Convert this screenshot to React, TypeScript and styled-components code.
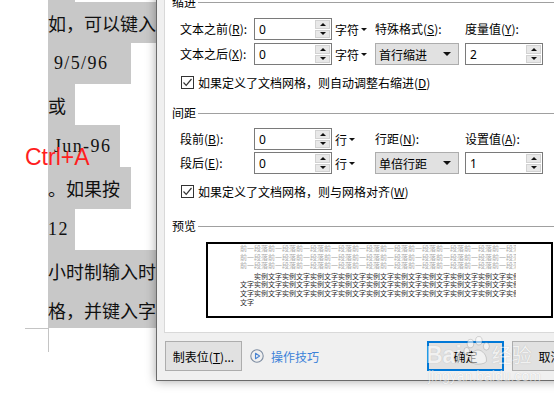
import React from 'react';
import styled, { createGlobalStyle } from 'styled-components';

const Global = createGlobalStyle`
  *, *::before, *::after { box-sizing: border-box; }
  html, body { margin: 0; padding: 0; background: #fff; }
  body {
    width: 554px; height: 396px; overflow: hidden;
    font-family: "Noto Sans CJK SC", "Noto Sans", sans-serif;
  }
`;

const Screen = styled.div`
  position: relative;
  display: flex;
  align-items: flex-start;
  width: 554px;
  height: 396px;
  overflow: hidden;
  background: #fff;
`;

/* ---------- document ---------- */
const DocPane = styled.div`
  flex: none;
  width: 156px;
  height: 396px;
  overflow: hidden;
  display: flex;
  flex-direction: column;
  align-items: flex-start;
  padding-left: 48px;
`;

const DocLine = styled.div<{ $h: number; $w: number; $latin?: boolean }>`
  flex: none;
  height: ${p => p.$h}px;
  width: ${p => p.$w}px;
  display: flex;
  align-items: center;
  background: #c8c8c8;
  white-space: pre;
  color: #111;
  font-family: ${p => (p.$latin ? '"Liberation Serif", serif' : '"Noto Sans CJK SC", sans-serif')};
  font-size: 18px;
  letter-spacing: ${p => (p.$latin ? '1.4px' : '0')};
`;

const CornerMark = styled.div`
  flex: none;
  margin-left: -23px;
  width: 24px;
  height: 24px;
  border-top: 1px solid #c4c4c4;
  border-right: 1px solid #c4c4c4;
`;

const Annotation = styled.div`
  position: absolute;
  left: 25px;
  top: 144px;
  z-index: 2;
  color: #ff1e1e;
  font-family: "Liberation Sans", Arial, sans-serif;
  font-size: 23px;
  line-height: 26px;
`;

/* ---------- dialog ---------- */
const Dialog = styled.div`
  position: relative;
  z-index: 1;
  flex: none;
  width: 448px;
  margin-top: -16px;
  background: #f0f0f0;
  border: 1px solid #6b6b6b;
  box-shadow: 0 0 10px rgba(0, 0, 0, 0.35);
  padding: 0 7px 9px 7px;
  display: flex;
  flex-direction: column;
  font-family: "Noto Sans CJK SC", "Noto Sans", sans-serif;
  font-size: 12px;
  color: #000;
`;

const TabPage = styled.div`
  background: #fff;
  border: 1px solid #d9d9d9;
  padding: 9px 7px 14px 7px;
  display: flex;
  flex-direction: column;
`;

const SectionHeader = styled.div<{ $mt: number }>`
  margin-top: ${p => p.$mt}px;
  height: 14px;
  display: flex;
  align-items: center;
  gap: 2px;
  line-height: 14px;
  white-space: nowrap;
`;

const Rule = styled.div`
  flex: 1;
  height: 1px;
  background: #a0a0a0;
`;

const FormGrid = styled.div<{ $mt: number; $gap: number }>`
  margin-top: ${p => p.$mt}px;
  margin-left: 8px;
  display: grid;
  grid-template-columns: 74px 78px 43px 90px 84px auto;
  grid-auto-rows: 22px;
  row-gap: ${p => p.$gap}px;
  align-items: center;
  white-space: nowrap;
`;

const Label = styled.span`
  line-height: 14px;
`;

const SpinBox = styled.div`
  width: 78px;
  height: 100%;
  display: flex;
  background: #fff;
  border: 1px solid #7a7a7a;
`;

const SpinValue = styled.span`
  flex: 1;
  display: flex;
  align-items: center;
  padding-left: 4px;
  font-family: "Noto Sans", sans-serif;
  font-size: 12px;
`;

const Spinner = styled.div`
  width: 15px;
  margin: 1px;
  display: flex;
  flex-direction: column;
  gap: 1px;
`;

const SpinBtn = styled.div`
  flex: 1;
  background: #e8e8e8;
  border: 1px solid #d2d2d2;
  display: flex;
  align-items: center;
  justify-content: center;
`;

const Tri = styled.span<{ $up?: boolean; $w: number; $h: number }>`
  width: 0;
  height: 0;
  border-left: ${p => p.$w / 2}px solid transparent;
  border-right: ${p => p.$w / 2}px solid transparent;
  ${p =>
    p.$up
      ? `border-bottom: ${p.$h}px solid #111;`
      : `border-top: ${p.$h}px solid #111;`}
`;

const Unit = styled.span`
  display: flex;
  align-items: center;
  gap: 2px;
  padding-left: 3px;
`;

const PlainUnit = styled.span`
  padding-left: 6px;
`;

const Select = styled.div`
  width: 84px;
  height: 100%;
  display: flex;
  align-items: center;
  justify-content: space-between;
  padding: 0 7px 0 3px;
  background: #e1e1e1;
  border: 1px solid #adadad;
`;

const CheckRow = styled.div<{ $mt: number }>`
  margin-top: ${p => p.$mt}px;
  margin-left: 9px;
  height: 16px;
  display: flex;
  align-items: center;
  gap: 4px;
  white-space: nowrap;
`;

const CheckBox = styled.span`
  width: 13px;
  height: 13px;
  flex: none;
  background: #fff;
  border: 1px solid #333;
  display: flex;
  align-items: center;
  justify-content: center;
`;

const PreviewBox = styled.div`
  margin-top: 9px;
  margin-left: 34px;
  width: 347px;
  height: 76px;
  background: #fff;
  border: 2px solid #000;
  padding-left: 32px;
  overflow: hidden;
  font-size: 7px;
  line-height: 8.6px;
`;

const PreviewLine = styled.div<{ $dark?: boolean; $indent?: number; $mt?: number }>`
  width: 276px;
  overflow: hidden;
  white-space: nowrap;
  color: ${p => (p.$dark ? '#2a2a2a' : '#ababab')};
  padding-left: ${p => p.$indent ?? 0}px;
  margin-top: ${p => p.$mt ?? 0}px;
`;

const Footer = styled.div`
  margin-top: 8px;
  padding: 0 7px 0 1px;
  height: 30px;
  display: flex;
  align-items: center;
`;

const Button = styled.div<{ $primary?: boolean }>`
  flex: none;
  width: 77px;
  height: 30px;
  display: flex;
  align-items: center;
  justify-content: center;
  background: #e1e1e1;
  border: ${p => (p.$primary ? '2px solid #0078d7' : '1px solid #adadad')};
  white-space: nowrap;
`;

const HelpLink = styled.div`
  margin-left: 8px;
  display: flex;
  align-items: center;
  gap: 7px;
  color: #3b82d9;
`;

const RightButtons = styled.div`
  margin-left: auto;
  display: flex;
  gap: 8px;
`;

/* ---------- watermark ---------- */
const Watermark = styled.div`
  position: absolute;
  left: 426px;
  top: 334px;
  z-index: 3;
  display: flex;
  flex-direction: column;
  align-items: flex-start;
  pointer-events: none;
  opacity: 0.55;
  color: #fff;
  text-shadow: 0 0 1px rgba(0, 0, 0, 0.35);
`;

const WmTop = styled.div`
  display: flex;
  align-items: flex-end;
  gap: 1px;
  height: 34px;
`;

const WmBai = styled.span`
  font-family: "Liberation Sans", Arial, sans-serif;
  font-weight: bold;
  font-size: 23px;
  line-height: 25px;
`;

const WmJing = styled.span`
  font-family: "Noto Sans CJK SC", sans-serif;
  font-size: 20px;
  line-height: 26px;
`;

const WmUrl = styled.span`
  font-family: "Liberation Sans", Arial, sans-serif;
  font-size: 14px;
  line-height: 16px;
  margin-left: 2px;
`;

const U = styled.u`
  text-underline-offset: 1px;
`;

const Spin = ({ v }: { v: string }) => (
  <SpinBox>
    <SpinValue>{v}</SpinValue>
    <Spinner>
      <SpinBtn>
        <Tri $up $w={6} $h={3} />
      </SpinBtn>
      <SpinBtn>
        <Tri $w={6} $h={3} />
      </SpinBtn>
    </Spinner>
  </SpinBox>
);

const DropUnit = ({ t }: { t: string }) => (
  <Unit>
    {t}
    <Tri $w={6} $h={3} />
  </Unit>
);

const Drop = ({ t }: { t: string }) => (
  <Select>
    <span>{t}</span>
    <Tri $w={8} $h={4} />
  </Select>
);

const Check = () => (
  <CheckBox>
    <svg width="11" height="11" viewBox="0 0 11 11">
      <polyline points="1.5,5.5 4.2,8.3 9.5,2" fill="none" stroke="#333" strokeWidth="1.2" />
    </svg>
  </CheckBox>
);

const Paw = () => (
  <svg width="28" height="30" viewBox="0 0 30 32" style={{ marginBottom: 2 }}>
    <g fill="#fff" stroke="rgba(0,0,0,0.35)" strokeWidth="0.8">
      <ellipse cx="8" cy="8" rx="3.5" ry="4.5" />
      <ellipse cx="17" cy="5" rx="3.5" ry="4.5" />
      <ellipse cx="25" cy="11" rx="3.2" ry="4" />
      <ellipse cx="4" cy="16" rx="3" ry="3.8" />
      <path d="M7 27 C6 20 12 15 16 15 C21 15 26 21 25 27 C24 31 9 31 7 27 Z" />
    </g>
  </svg>
);

const grayLine = '前一段落'.repeat(12);
const darkA = '实例文字'.repeat(12);
const darkB = '文字实例'.repeat(12);

export default function App() {
  return (
    <>
      <Global />
      <Screen>
        <DocPane>
          <DocLine $h={2} $w={27} />
          <DocLine $h={41} $w={120}>如，可以键入</DocLine>
          <DocLine $h={41} $w={83} $latin>{' 9/5/96'}</DocLine>
          <DocLine $h={41} $w={27}>或</DocLine>
          <DocLine $h={42} $w={72} $latin>{' Jun-96'}</DocLine>
          <DocLine $h={42} $w={83}>。如果按</DocLine>
          <DocLine $h={41} $w={27} $latin>12</DocLine>
          <DocLine $h={42} $w={120}>小时制输入时</DocLine>
          <DocLine $h={36} $w={120}>格，并键入字</DocLine>
          <CornerMark />
        </DocPane>

        <Annotation>Ctrl+A</Annotation>

        <Dialog>
          <TabPage>
            <SectionHeader $mt={0}>
              <span>缩进</span>
              <Rule />
            </SectionHeader>
            <FormGrid $mt={9} $gap={3}>
              <Label>文本之前(<U>R</U>):</Label>
              <Spin v="0" />
              <DropUnit t="字符" />
              <Label>特殊格式(<U>S</U>):</Label>
              <Label>度量值(<U>Y</U>):</Label>
              <span />
              <Label>文本之后(<U>X</U>):</Label>
              <Spin v="0" />
              <DropUnit t="字符" />
              <Drop t="首行缩进" />
              <Spin v="2" />
              <PlainUnit>字</PlainUnit>
            </FormGrid>
            <CheckRow $mt={9}>
              <Check />
              <span>如果定义了文档网格，则自动调整右缩进(<U>D</U>)</span>
            </CheckRow>

            <SectionHeader $mt={16}>
              <span>间距</span>
              <Rule />
            </SectionHeader>
            <FormGrid $mt={8} $gap={2}>
              <Label>段前(<U>B</U>):</Label>
              <Spin v="0" />
              <DropUnit t="行" />
              <Label>行距(<U>N</U>):</Label>
              <Label>设置值(<U>A</U>):</Label>
              <span />
              <Label>段后(<U>E</U>):</Label>
              <Spin v="0" />
              <DropUnit t="行" />
              <Drop t="单倍行距" />
              <Spin v="1" />
              <PlainUnit>倍</PlainUnit>
            </FormGrid>
            <CheckRow $mt={9}>
              <Check />
              <span>如果定义了文档网格，则与网格对齐(<U>W</U>)</span>
            </CheckRow>

            <SectionHeader $mt={20}>
              <span>预览</span>
              <Rule />
            </SectionHeader>
            <PreviewBox>
              <PreviewLine>{grayLine}</PreviewLine>
              <PreviewLine>{grayLine}</PreviewLine>
              <PreviewLine>{grayLine}</PreviewLine>
              <PreviewLine $dark $indent={14} $mt={2}>{darkA}</PreviewLine>
              <PreviewLine $dark>{darkB}</PreviewLine>
              <PreviewLine $dark>{darkB}</PreviewLine>
              <PreviewLine $dark>文字</PreviewLine>
            </PreviewBox>
          </TabPage>

          <Footer>
            <Button>
              <span>制表位(<U>T</U>)...</span>
            </Button>
            <HelpLink>
              <svg width="14" height="14" viewBox="0 0 14 14">
                <circle cx="7" cy="7" r="6.2" fill="none" stroke="#7f8ea3" strokeWidth="1.1" />
                <path d="M5.5 4.3 L9.6 7 L5.5 9.7 Z" fill="none" stroke="#4a84d2" strokeWidth="1.1" strokeLinejoin="round" />
              </svg>
              <span>操作技巧</span>
            </HelpLink>
            <RightButtons>
              <Button $primary>确定</Button>
              <Button>取消</Button>
            </RightButtons>
          </Footer>
        </Dialog>

        <Watermark>
          <WmTop>
            <WmBai>Bai</WmBai>
            <Paw />
            <WmJing>经验</WmJing>
          </WmTop>
          <WmUrl>jingyan.baidu.com</WmUrl>
        </Watermark>
      </Screen>
    </>
  );
}
